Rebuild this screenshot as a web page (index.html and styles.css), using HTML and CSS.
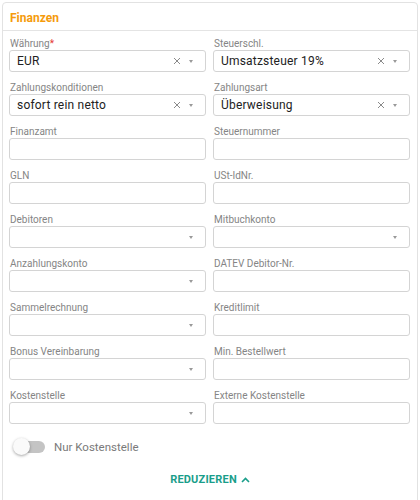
FILE: index.html
```html
<!DOCTYPE html>
<html lang="de">
<head>
<meta charset="utf-8">
<title>Finanzen</title>
<link rel="stylesheet" href="styles.css">
</head>
<body>
<div class="card">
  <div class="card-header">Finanzen</div>
  <div class="card-body">
    <div class="grid">
      <div class="field">
        <label class="label">Währung<span class="req">*</span></label>
        <div class="input select"><span class="value">EUR</span><svg class="clear" width="8" height="8" viewBox="0 0 8 8"><path d="M1 1 L7 7 M7 1 L1 7" stroke="#8a8a8a" stroke-width="1"/></svg><span class="caret"></span></div>
      </div>
      <div class="field">
        <label class="label">Steuerschl.</label>
        <div class="input select"><span class="value">Umsatzsteuer 19%</span><svg class="clear" width="8" height="8" viewBox="0 0 8 8"><path d="M1 1 L7 7 M7 1 L1 7" stroke="#8a8a8a" stroke-width="1"/></svg><span class="caret"></span></div>
      </div>
      <div class="field">
        <label class="label">Zahlungskonditionen</label>
        <div class="input select"><span class="value">sofort rein netto</span><svg class="clear" width="8" height="8" viewBox="0 0 8 8"><path d="M1 1 L7 7 M7 1 L1 7" stroke="#8a8a8a" stroke-width="1"/></svg><span class="caret"></span></div>
      </div>
      <div class="field">
        <label class="label">Zahlungsart</label>
        <div class="input select"><span class="value">Überweisung</span><svg class="clear" width="8" height="8" viewBox="0 0 8 8"><path d="M1 1 L7 7 M7 1 L1 7" stroke="#8a8a8a" stroke-width="1"/></svg><span class="caret"></span></div>
      </div>
      <div class="field">
        <label class="label">Finanzamt</label>
        <div class="input"></div>
      </div>
      <div class="field">
        <label class="label">Steuernummer</label>
        <div class="input"></div>
      </div>
      <div class="field">
        <label class="label">GLN</label>
        <div class="input"></div>
      </div>
      <div class="field">
        <label class="label">USt-IdNr.</label>
        <div class="input"></div>
      </div>
      <div class="field">
        <label class="label">Debitoren</label>
        <div class="input select"><span class="value"></span><span class="caret"></span></div>
      </div>
      <div class="field">
        <label class="label">Mitbuchkonto</label>
        <div class="input select"><span class="value"></span><span class="caret"></span></div>
      </div>
      <div class="field">
        <label class="label">Anzahlungskonto</label>
        <div class="input select"><span class="value"></span><span class="caret"></span></div>
      </div>
      <div class="field">
        <label class="label">DATEV Debitor-Nr.</label>
        <div class="input"></div>
      </div>
      <div class="field">
        <label class="label">Sammelrechnung</label>
        <div class="input select"><span class="value"></span><span class="caret"></span></div>
      </div>
      <div class="field">
        <label class="label">Kreditlimit</label>
        <div class="input"></div>
      </div>
      <div class="field">
        <label class="label">Bonus Vereinbarung</label>
        <div class="input select"><span class="value"></span><span class="caret"></span></div>
      </div>
      <div class="field">
        <label class="label">Min. Bestellwert</label>
        <div class="input"></div>
      </div>
      <div class="field">
        <label class="label">Kostenstelle</label>
        <div class="input select"><span class="value"></span><span class="caret"></span></div>
      </div>
      <div class="field">
        <label class="label">Externe Kostenstelle</label>
        <div class="input"></div>
      </div>
    </div>
    <div class="toggle-row">
      <span class="toggle"><span class="track"></span><span class="knob"></span></span>
      <span class="toggle-label">Nur Kostenstelle</span>
    </div>
    <div class="actions">
      <span class="reduce">REDUZIEREN
        <svg class="chev" width="9" height="6" viewBox="0 0 9 6"><path d="M1 5 L4.5 1.5 L8 5" fill="none" stroke="#1a9e8a" stroke-width="1.6"/></svg>
      </span>
    </div>
  </div>
</div>
</body>
</html>
```

FILE: styles.css
```css
html, body {
  margin: 0;
  padding: 0;
  background: #ffffff;
  font-family: Roboto, "Liberation Sans", Arial, sans-serif;
}

.card {
  margin: 2px 0 0 2px;
  width: 416px;
  box-sizing: border-box;
  border: 1px solid #e2e2e2;
  border-radius: 4px;
  min-height: 520px;
  background: #fff;
}

.card-header {
  height: 28px;
  box-sizing: border-box;
  padding: 8px 0 0 7px;
  font-size: 12px;
  font-weight: 700;
  color: #f59b0c;
  border-bottom: 1px solid #e4e4e4;
  line-height: 14px;
}

.card-body {
  padding: 7px 6px 0 6px;
}

.grid {
  display: grid;
  grid-template-columns: 197px 197px;
  column-gap: 7px;
  row-gap: 10px;
}

.field {
  display: flex;
  flex-direction: column;
}

.label {
  font-size: 10px;
  line-height: 12px;
  height: 12px;
  color: #858585;
  padding-left: 1px;
}

.req {
  color: #e53935;
}

.input {
  height: 22px;
  box-sizing: border-box;
  border: 1px solid #d4d4d4;
  border-radius: 3px;
  display: flex;
  align-items: center;
  padding: 0 0 0 7px;
  font-size: 12px;
  color: #222;
}

.value {
  flex: 1;
  white-space: nowrap;
  overflow: hidden;
  letter-spacing: 0.2px;
}

.clear {
  display: block;
  margin-right: 8px;
}

.caret {
  width: 0;
  height: 0;
  border-left: 2.5px solid transparent;
  border-right: 2.5px solid transparent;
  border-top: 3px solid #999;
  margin: 0 12px 0 0;
}

.toggle-row {
  display: flex;
  align-items: center;
  margin-top: 14px;
  padding-left: 4px;
  height: 18px;
}

.toggle {
  position: relative;
  width: 32px;
  height: 18px;
  display: inline-block;
}

.track {
  position: absolute;
  left: 2px;
  top: 3px;
  width: 30px;
  height: 12px;
  border-radius: 6px;
  background: #c4c4c4;
}

.knob {
  position: absolute;
  left: 0;
  top: 0;
  width: 17px;
  height: 17px;
  border-radius: 50%;
  background: #fafafa;
  box-shadow: 0 1px 3px rgba(0,0,0,0.35);
}

.toggle-label {
  margin-left: 9px;
  font-size: 11.5px;
  color: #7a7a7a;
}

.actions {
  display: flex;
  justify-content: center;
  margin-top: 17px;
}

.reduce {
  font-size: 11px;
  font-weight: 700;
  color: #1a9e8a;
  letter-spacing: 0.2px;
  display: inline-flex;
  align-items: center;
  gap: 4px;
}

.chev {
  display: block;
}
```
